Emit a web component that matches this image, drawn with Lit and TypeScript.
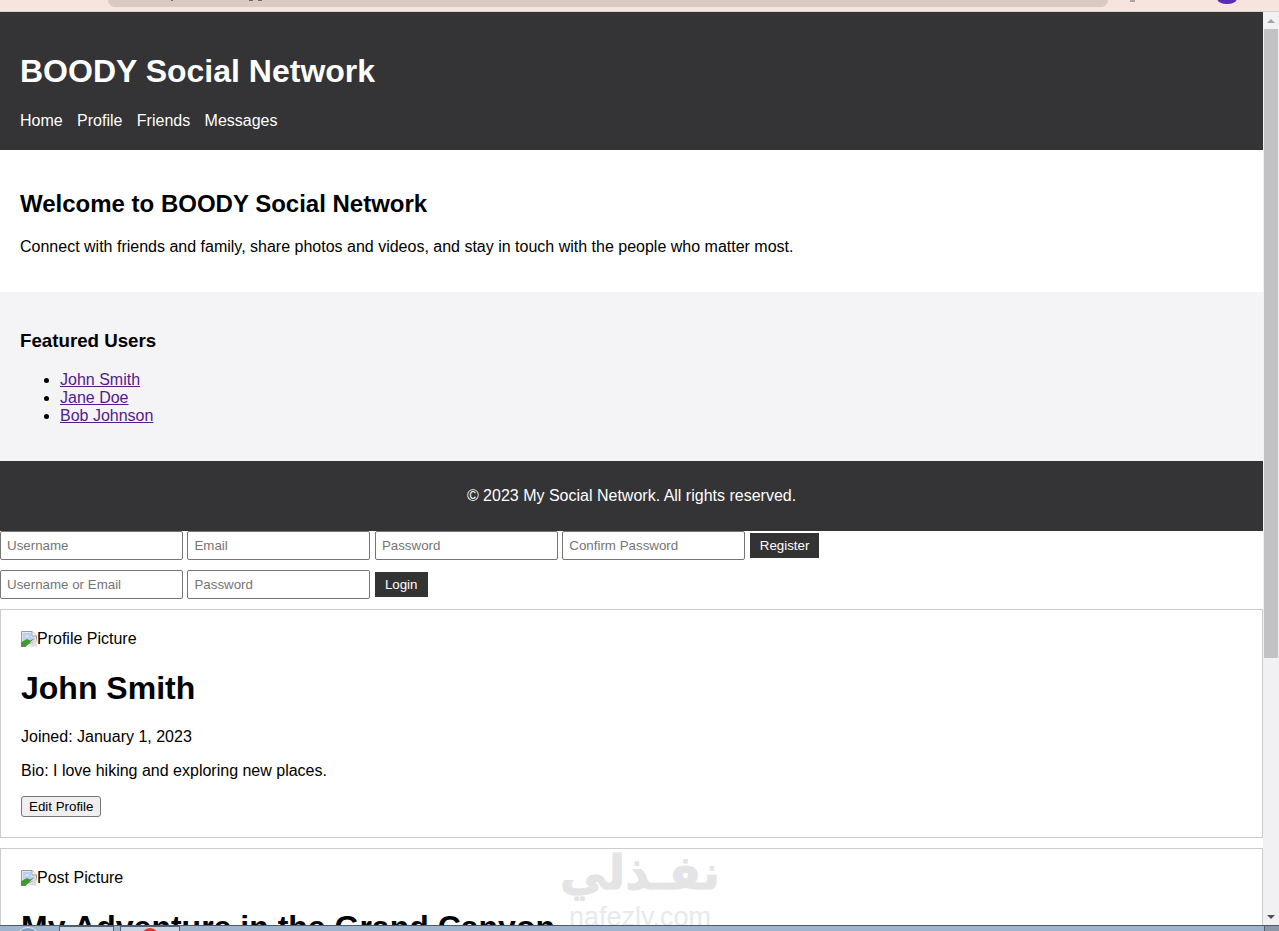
import { LitElement, html, css, svg } from "lit";
import { customElement } from "lit/decorators.js";

const brokenImage = svg`<svg class="broken" width="16" height="16" viewBox="0 0 16 16">
  <path d="M.5.5H11L15.5 5V10L.5 15.500Z" fill="#e4e7ec" stroke="#999"/>
  <path d="M11 .5V5H15.5" fill="#fff" stroke="#999"/>
  <path d="M2 2H10V6.500H14V9L2 12Z" fill="#bcd0ee"/>
  <path d="M4 5.500C5.500 4 7 4.500 8 5.500Z" fill="#fff"/>
  <path d="M.5 15.500V11L6 8L9 9.500L13 7.500L5 15.500Z" fill="#3f9a32"/>
  <path d="M.5 11V15.500H5" fill="none" stroke="#777"/>
  <path d="M7 15.500L15.500 8V15.500Z" fill="#dedede"/>
</svg>`;

@customElement("app-root")
export class AppRoot extends LitElement {
  static styles = css`
    :host {
      display: block;
      height: 931px;
      overflow: hidden;
      position: relative;
      font-family: "Liberation Sans", Arial, sans-serif;
      font-size: 16px;
      color: #000;
      background: #fff;
    }
    .chrome {
      height: 12px;
      box-sizing: border-box;
      background: #f8e4de;
      border-bottom: 1px solid #dfd0ca;
      position: relative;
    }
    .address {
      height: 7px;
      margin: 0 171px 0 108px;
      background: #dacac3;
      border-radius: 0 0 14px 14px;
    }
    .mark {
      position: absolute;
      top: 0;
      width: 2px;
      height: 1px;
      background: #6f6a68;
    }
    .mark-a { left: 171px; }
    .mark-b { left: 249px; width: 4px; }
    .mark-c { left: 258px; width: 4px; }
    .mark-d { left: 1130px; width: 5px; height: 2px; background: #a9a5a3; }
    .avatar {
      position: absolute;
      left: 1217px;
      top: -7px;
      width: 20px;
      height: 11px;
      border-radius: 50%;
      background: #5b2db3;
    }
    .viewport {
      display: flex;
      height: 913px;
      overflow: hidden;
    }
    .page {
      flex: 1;
      min-width: 0;
      overflow: hidden;
    }
    .scrollbar {
      width: 16px;
      flex: none;
      background: #f1f0f2;
      display: flex;
      flex-direction: column;
      align-items: center;
      justify-content: space-between;
    }
    .thumb {
      width: 14px;
      height: 629px;
      background: #c2c1c4;
      margin-top: 17px;
      margin-bottom: auto;
    }
    .arrow-down {
      width: 0;
      height: 0;
      border-left: 4px solid transparent;
      border-right: 4px solid transparent;
      border-top: 4px solid #505050;
      margin-bottom: 6px;
    }
    .arrow-up {
      position: absolute;
      left: 1267px;
      top: 19px;
      width: 0;
      height: 0;
      border-left: 4px solid transparent;
      border-right: 4px solid transparent;
      border-bottom: 4px solid #a3a3a3;
    }
    .taskbar {
      height: 6px;
      background: #9fb4cf;
      border-top: 1px solid #4d5a6b;
      box-sizing: border-box;
      display: flex;
      position: relative;
      z-index: 2;
      overflow: hidden;
      padding-left: 15px;
    }
    .orb {
      width: 26px;
      height: 26px;
      flex: none;
      margin-top: 1px;
      border: 1px solid #e8eef6;
      border-radius: 50%;
      box-sizing: border-box;
      background: #7f9dbf;
      margin-right: 18px;
    }
    .task {
      width: 55px;
      flex: none;
      background: #c9d5e4;
      border: 1px solid #55606e;
      border-bottom: 0;
      box-sizing: border-box;
      margin-right: 6px;
    }
    .task.wide {
      width: 60px;
      display: flex;
      justify-content: center;
    }
    .red {
      width: 18px;
      height: 18px;
      border-radius: 50%;
      background: #e0362c;
      margin-top: 1px;
    }
    .tray {
      width: 14px;
      margin-left: auto;
      background: #8a97a8;
      border-left: 1px solid #55606e;
    }
    header {
      background: #343335;
      color: #fff;
      padding: 20px;
    }
    h1 {
      font-size: 32px;
      line-height: 37px;
      margin: 21px 0;
    }
    nav {
      display: flex;
      gap: 14.4px;
      line-height: 18px;
      padding-top: 1px;
    }
    .nav-link {
      color: #fff;
      text-decoration: none;
    }
    .welcome {
      padding: 20px;
    }
    h2 {
      font-size: 24px;
      line-height: 28px;
      margin: 20px 0;
    }
    .welcome p {
      line-height: 18px;
      margin: 16px 0;
    }
    .featured {
      background: #f4f3f6;
      padding: 20px;
    }
    h3 {
      font-size: 18.72px;
      line-height: 22px;
      margin: 18px 0 19px;
    }
    ul {
      margin: 16px 0;
      padding-left: 40px;
      line-height: 18px;
    }
    .featured a {
      color: #551a8b;
    }
    footer {
      background: #343335;
      color: #fff;
      text-align: center;
      padding: 26px 20px;
      line-height: 18px;
    }
    form {
      display: flex;
      align-items: center;
      gap: 4.45px;
      margin-bottom: 10px;
    }
    input {
      width: 183px;
      height: 29px;
      flex: none;
      box-sizing: border-box;
      border: 1px solid #767676;
      border-radius: 2px;
      padding: 1px 6px;
      font: 13.33px "Liberation Sans", Arial, sans-serif;
      background: #fff;
    }
    input::placeholder {
      color: #757575;
    }
    .primary {
      height: 25px;
      padding: 0 10px;
      border: 0;
      background: #333;
      color: #fff;
      font: 13.33px "Liberation Sans", Arial, sans-serif;
    }
    .card {
      border: 1px solid #ccc;
      padding: 20px;
      margin-bottom: 10px;
    }
    .alt {
      display: flex;
      align-items: center;
      line-height: 18px;
    }
    .broken {
      flex: none;
    }
    .card h2.name {
      font-size: 32px;
      line-height: 37px;
      margin: 22px 0 21px;
    }
    .card p {
      line-height: 18px;
      margin: 16px 0;
    }
    .edit {
      height: 21px;
      padding: 1px 7px;
      box-sizing: border-box;
      border: 1px solid #767676;
      border-radius: 3px;
      background: #efefef;
      color: #000;
      font: 13.33px "Liberation Sans", Arial, sans-serif;
      display: block;
    }
    .watermark {
      position: absolute;
      left: 553px;
      top: 845px;
      width: 174px;
      color: #e4e4e6;
      text-align: center;
      pointer-events: none;
    }
    .watermark .ar {
      font: 700 47px/56px "DejaVu Sans", sans-serif;
      -webkit-text-stroke: 1px #e4e4e6;
      direction: rtl;
      display: block;
      height: 57px;
    }
    .watermark .en {
      font: 400 27px/30px "Liberation Sans", Arial, sans-serif;
      display: block;
      color: #e9e9eb;
    }
  `;

  render() {
    return html`
      <div class="chrome">
        <div class="address"></div>
        <i class="mark mark-a"></i><i class="mark mark-b"></i><i class="mark mark-c"></i><i class="mark mark-d"></i>
        <div class="avatar"></div>
      </div>
      <div class="arrow-up"></div>
      <div class="viewport">
        <div class="page">
          <header>
            <h1>BOODY Social Network</h1>
            <nav>
              <a class="nav-link" href="#">Home</a>
              <a class="nav-link" href="#">Profile</a>
              <a class="nav-link" href="#">Friends</a>
              <a class="nav-link" href="#">Messages</a>
            </nav>
          </header>
          <section class="welcome">
            <h2>Welcome to BOODY Social Network</h2>
            <p>Connect with friends and family, share photos and videos, and stay in touch with the people who matter most.</p>
          </section>
          <section class="featured">
            <h3>Featured Users</h3>
            <ul>
              <li><a href="#">John Smith</a></li>
              <li><a href="#">Jane Doe</a></li>
              <li><a href="#">Bob Johnson</a></li>
            </ul>
          </section>
          <footer>© 2023 My Social Network. All rights reserved.</footer>
          <form>
            <input placeholder="Username" />
            <input placeholder="Email" />
            <input placeholder="Password" />
            <input placeholder="Confirm Password" />
            <button class="primary" type="button">Register</button>
          </form>
          <form>
            <input placeholder="Username or Email" />
            <input placeholder="Password" />
            <button class="primary" type="button">Login</button>
          </form>
          <section class="card">
            <div class="alt">${brokenImage}<span>Profile Picture</span></div>
            <h2 class="name">John Smith</h2>
            <p>Joined: January 1, 2023</p>
            <p>Bio: I love hiking and exploring new places.</p>
            <button class="edit" type="button">Edit Profile</button>
          </section>
          <section class="card">
            <div class="alt">${brokenImage}<span>Post Picture</span></div>
            <h2 class="name">My Adventure in the Grand Canyon</h2>
          </section>
        </div>
        <div class="scrollbar">
          <div class="thumb"></div>
          <div class="arrow-down"></div>
        </div>
      </div>
      <div class="taskbar">
        <div class="orb"></div>
        <div class="task"></div>
        <div class="task wide"><div class="red"></div></div>
        <div class="tray"></div>
      </div>
      <div class="watermark"><span class="ar">نفـذلي</span><span class="en">nafezly.com</span></div>
    `;
  }
}
